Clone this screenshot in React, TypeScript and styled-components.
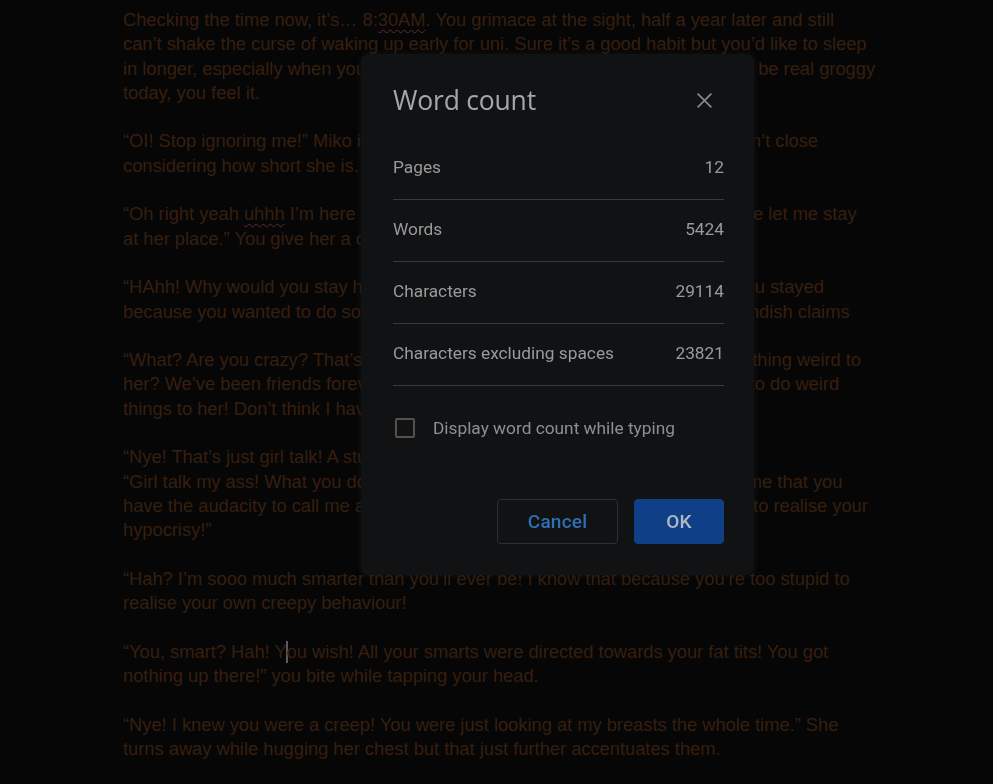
import styled, { createGlobalStyle } from "styled-components";

const GlobalStyle = createGlobalStyle`
  html, body {
    margin: 0;
    background: #060606;
  }
  body {
    font-family: "Liberation Sans", Arial, sans-serif;
  }
`;

type Row = { label: string; value: string };

const stats: Row[] = [
  { label: "Pages", value: "12" },
  { label: "Words", value: "5424" },
  { label: "Characters", value: "29114" },
  { label: "Characters excluding spaces", value: "23821" },
];

function App() {
  return (
    <>
      <GlobalStyle />
      <Doc>
        <Para>
          <Line>
            Checking the time now, it’s… 8:<Typo>30AM</Typo>. You grimace at the sight, half a year later and still
          </Line>
          <Line>can’t shake the curse of waking up early for uni. Sure it’s a good habit but you’d like to sleep</Line>
          <Line>in longer, especially when you stayed up mighty late last night. You’re going to be real groggy</Line>
          <Line>today, you feel it.</Line>
        </Para>
        <Para>
          <Line>“OI! Stop ignoring me!” Miko insists, leaning in close to your face. Not that it isn’t close</Line>
          <Line>considering how short she is.</Line>
        </Para>
        <Para>
          <Line>
            “Oh right yeah <Typo>uhhh</Typo> I’m here because my sister kicked me out last night so she let me stay
          </Line>
          <Line>at her place.” You give her a cheeky grin.</Line>
        </Para>
        <Para>
          <Line>“HAhh! Why would you stay here? That makes no sense, I totally know that you stayed</Line>
          <Line>because you wanted to do something to her!” Miko really loudly makes her fiendish claims</Line>
        </Para>
        <Para>
          <Line>“What? Are you crazy? That’s my big sister! Why on earth would I ever do anything weird to</Line>
          <Line>her? We’ve been friends forever, and really you’re the one who always wants to do weird</Line>
          <Line>things to her! Don’t think I haven’t heard you.”</Line>
        </Para>
        <Para>
          <Line>“Nye! That’s just girl talk! A stupid boy like you wouldn’t get it!”</Line>
          <Line>“Girl talk my ass! What you do to her is just plain creepy and it really amazes me that you</Line>
          <Line>have the audacity to call me a creep when you’re clearly too dumb and stupid to realise your</Line>
          <Line>hypocrisy!”</Line>
        </Para>
        <Para>
          <Line>“Hah? I’m sooo much smarter than you’ll ever be! I know that because you’re too stupid to</Line>
          <Line>realise your own creepy behaviour!</Line>
        </Para>
        <Para>
          <Line>
            “You, smart? Hah! Y<Caret />ou wish! All your smarts were directed towards your fat tits! You got
          </Line>
          <Line>nothing up there!” you bite while tapping your head.</Line>
        </Para>
        <Para>
          <Line>“Nye! I knew you were a creep! You were just looking at my breasts the whole time.” She</Line>
          <Line>turns away while hugging her chest but that just further accentuates them.</Line>
        </Para>
      </Doc>

      <Dialog role="dialog" aria-label="Word count">
        <Header>
          <Title>Word count</Title>
          <CloseButton aria-label="Close">
            <svg width="17" height="17" viewBox="0 0 16 16">
              <path d="M1.5 1.5 L14.5 14.5 M14.5 1.5 L1.5 14.5" stroke="#8a8b8d" strokeWidth="1.5" fill="none" />
            </svg>
          </CloseButton>
        </Header>
        <StatList>
          {stats.map((s) => (
            <StatRow key={s.label}>
              <span>{s.label}</span>
              <span>{s.value}</span>
            </StatRow>
          ))}
        </StatList>
        <CheckRow>
          <Box />
          <span>Display word count while typing</span>
        </CheckRow>
        <Footer>
          <Button>Cancel</Button>
          <Button primary>OK</Button>
        </Footer>
      </Dialog>
    </>
  );
}
export default App;

const Doc = styled.div`
  padding: 8px 0 0 123px;
  width: 760px;
  font-size: 18.3px;
  line-height: 24.3px;
  color: #371f0e;
`;

const Para = styled.div`
  margin-bottom: 24.3px;
`;

const Line = styled.div`
  white-space: pre;
`;

const Typo = styled.span`
  text-decoration: underline wavy #5e2a30;
  text-decoration-thickness: 1px;
  text-underline-offset: 3px;
`;

const Caret = styled.span`
  display: inline-block;
  width: 2px;
  height: 22px;
  margin: 0 -1px;
  vertical-align: -5px;
  background: #5a5a5e;
`;

const Dialog = styled.div`
  position: fixed;
  left: 361px;
  top: 54px;
  width: 393px;
  height: 521px;
  box-sizing: border-box;
  padding: 30px 30px 31px 32px;
  display: flex;
  flex-direction: column;
  background: #111214;
  border-radius: 8px;
  box-shadow: 0 0 6px rgba(30, 30, 34, 0.6);
  font-family: Roboto, "Liberation Sans", sans-serif;
`;

const Header = styled.div`
  display: flex;
  align-items: center;
  justify-content: space-between;
  height: 32px;
  margin-bottom: 22px;
`;

const Title = styled.h2`
  margin: 0;
  font-family: "Open Sans", Roboto, sans-serif;
  font-weight: 400;
  font-size: 26.5px;
  letter-spacing: -0.2px;
  color: #a3a6aa;
`;

const CloseButton = styled.button`
  display: flex;
  align-items: center;
  justify-content: center;
  width: 32px;
  height: 32px;
  margin-right: 4px;
  padding: 0;
  border: none;
  background: none;
`;

const StatList = styled.div`
  display: flex;
  flex-direction: column;
`;

const StatRow = styled.div`
  display: flex;
  align-items: center;
  justify-content: space-between;
  height: 62px;
  padding-bottom: 3px;
  box-sizing: border-box;
  border-bottom: 1.5px solid #38393c;
  font-size: 17.3px;
  color: #9a9a9a;
`;

const CheckRow = styled.div`
  display: flex;
  align-items: center;
  gap: 18px;
  margin-top: 32px;
  padding-left: 2px;
  font-size: 17.3px;
  color: #8f8f8f;
`;

const Box = styled.span`
  width: 16px;
  height: 16px;
  border: 2px solid #55514a;
  border-radius: 2px;
`;

const Footer = styled.div`
  margin-top: auto;
  display: flex;
  justify-content: flex-end;
  gap: 16px;
`;

const Button = styled.button<{ primary?: boolean }>`
  height: 45px;
  width: ${(p) => (p.primary ? "90px" : "121px")};
  border-radius: 4px;
  border: 1px solid ${(p) => (p.primary ? "#0f4087" : "#2f3033")};
  background: ${(p) => (p.primary ? "#0f4087" : "transparent")};
  color: ${(p) => (p.primary ? "#b0b8c2" : "#2f6fb4")};
  font-family: Roboto, "Liberation Sans", sans-serif;
  font-size: 19px;
  font-weight: 500;
  letter-spacing: 0.2px;
`;
